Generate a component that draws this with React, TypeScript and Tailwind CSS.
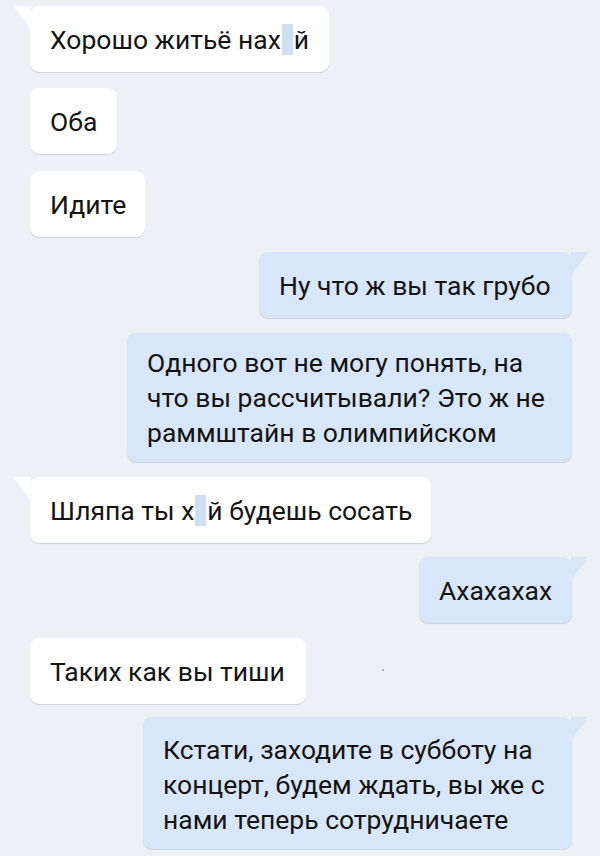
import type { ReactNode } from "react";

type Side = "in" | "out";

interface BubbleProps {
  side: Side;
  width: string;
  tail?: boolean;
  pad?: string;
  children: ReactNode;
}

function Tail({ side, fill }: { side: Side; fill: string }) {
  if (side === "in") {
    return (
      <svg
        className="absolute -left-[17px] top-0"
        width="18"
        height="26"
        viewBox="0 0 18 26"
      >
        <path
          d="M18 0 H2.5 Q0 0 1.6 1.8 L14.5 18.5 Q17 21.5 17 25 L18 26 Z"
          fill={fill}
        />
      </svg>
    );
  }
  return (
    <svg
      className="absolute -right-[17px] top-0"
      width="18"
      height="26"
      viewBox="0 0 18 26"
    >
      <path
        d="M0 0 H15.5 Q18 0 16.4 1.8 L3.5 18.5 Q1 21.5 1 25 L0 26 Z"
        fill={fill}
      />
    </svg>
  );
}

function Bubble({ side, width, tail, pad, children }: BubbleProps) {
  const isIn = side === "in";
  return (
    <div className={isIn ? "flex justify-start pl-[30px]" : "flex justify-end pr-[28px]"}>
      <div
        className={`relative rounded-[9px] shadow-[0_1px_1px_rgba(60,80,110,0.18)] px-5 text-[26.5px] leading-[35px] text-[#141414] ${
          isIn ? "bg-white" : "bg-[#d7e6f8]"
        } ${pad ? pad : "h-[66px] flex items-center"} ${width}`}
      >
        {tail && <Tail side={side} fill={isIn ? "#ffffff" : "#d7e6f8"} />}
        <div className="whitespace-nowrap">{children}</div>
      </div>
    </div>
  );
}

function Censor() {
  return (
    <span className="inline-block w-[11px] h-[31px] align-[-6px] bg-[#cfe0f4] mx-[1px]" />
  );
}

export default function App() {
  return (
    <div
      className="w-[600px] h-[856px] bg-[#edf0f4] overflow-hidden pt-[6px] flex flex-col"
      style={{ fontFamily: "Roboto, 'Noto Sans', sans-serif" }}
    >
      <Bubble side="in" width="w-[299px]" tail>
        Хорошо житьё нах<Censor />й
      </Bubble>
      <div className="h-[16px]" />
      <Bubble side="in" width="w-[87px]">
        Оба
      </Bubble>
      <div className="h-[17px]" />
      <Bubble side="in" width="w-[115px]">
        Идите
      </Bubble>
      <div className="h-[15px]" />
      <Bubble side="out" width="w-[313px]" tail>
        Ну что ж вы так грубо
      </Bubble>
      <div className="h-[15px]" />
      <Bubble side="out" width="w-[445px]" pad="py-3">
        Одного вот не могу понять, на
        <br />
        что вы рассчитывали? Это ж не
        <br />
        раммштайн в олимпийском
      </Bubble>
      <div className="h-[15px]" />
      <Bubble side="in" width="w-[401px]" tail>
        Шляпа ты х<Censor />й будешь сосать
      </Bubble>
      <div className="h-[14px]" />
      <Bubble side="out" width="w-[153px]" tail>
        Ахахахах
      </Bubble>
      <div className="h-[15px]" />
      <div className="relative">
        <Bubble side="in" width="w-[276px]">
          Таких как вы тиши
        </Bubble>
        <span className="absolute left-[382px] top-[31px] w-[2px] h-[2px] rounded-full bg-[#9aa0a8]" />
      </div>
      <div className="h-[13px]" />
      <Bubble side="out" width="w-[429px]" tail pad="pt-[15px] pb-[12px]">
        Кстати, заходите в субботу на
        <br />
        концерт, будем ждать, вы же с
        <br />
        нами теперь сотрудничаете
      </Bubble>
    </div>
  );
}
